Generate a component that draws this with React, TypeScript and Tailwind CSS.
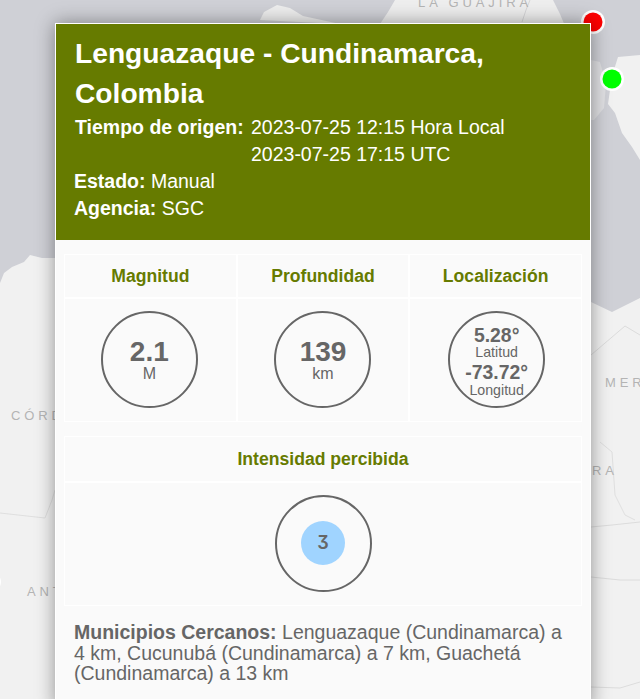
const font = "font-['Liberation_Sans',Arial,sans-serif]";

function MapBackground() {
  return (
    <svg className="absolute inset-0" width="640" height="699" viewBox="0 0 640 699">
      <rect width="640" height="699" fill="#cfd0d6" />
      <path d="M0 283 L4 273 L12 267 L24 262 L30 255 L42 258 L60 258 L60 699 L0 699 Z" fill="#f1f1f1" />
      <path d="M260 20 L264 12 L277 5 L290 8 L303 16 L340 24 Z" fill="#eeeeee" />
      <path d="M380 24 L388 12 L395 0 L553 0 L560 14 L565 26 Z" fill="#eeeeee" />
      <path d="M530 0 L526 10 L522 22" fill="none" stroke="#d6d6d8" />
      <path d="M591 60 L600 62 L606 84 L604 108 L594 120 L591 120 Z" fill="#dfdfe2" />
      <path d="M618 57 L640 55 L640 160 L632 147 L622 133 L615 113 L608 104 L612 76 Z" fill="#f1f1f1" />
      <path d="M591 302 L612 312 L628 304 L640 298 L640 699 L591 699 Z" fill="#f1f1f1" />
      <path d="M591 355 L625 326 L640 335" fill="none" stroke="#dcdcdc" />
      <path d="M591 527 L612 525 L640 522 M591 577 L620 580 L640 580 M591 687 L620 688 L640 682" fill="none" stroke="#dcdcdc" />
      <path d="M600 442 L612 452 L615 495 L625 515 L635 520" fill="none" stroke="#dfdfdf" />
      <path d="M0 513 L45 518 L52 500 L55 490" fill="none" stroke="#dfdfdf" />
      <circle cx="-9" cy="582" r="10" fill="#ffffff" />
      <circle cx="593" cy="22" r="12" fill="#ffffff" />
      <circle cx="593" cy="22" r="9.5" fill="#ff0000" />
      <circle cx="612" cy="79" r="12" fill="#ffffff" />
      <circle cx="612" cy="79" r="9.5" fill="#00ff00" />
    </svg>
  );
}

function MapLabel({ children, className }: { children: string; className: string }) {
  return <span className={`absolute text-[13px] leading-none tracking-[0.3em] text-[#b4b4b4] ${className}`}>{children}</span>;
}

function Circle({ children }: { children: React.ReactNode }) {
  return (
    <div className="flex h-[97px] w-[97px] flex-col items-center justify-center rounded-full border-[2px] border-[#666666]">
      {children}
    </div>
  );
}

function Cell({ children, className = "" }: { children: React.ReactNode; className?: string }) {
  return <div className={`flex items-center justify-center bg-[#fafafa] ${className}`}>{children}</div>;
}

function Heading({ children }: { children: string }) {
  return <h3 className="mt-[2px] text-[17.6px] leading-none font-bold text-[#667b00]">{children}</h3>;
}

export default function App() {
  return (
    <div className={`relative h-[699px] w-[640px] overflow-hidden ${font}`}>
      <MapBackground />
      <MapLabel className="left-[418px] top-[-4px]">LA GUAJIRA</MapLabel>
      <MapLabel className="left-[11px] top-[409px]">CÓRD</MapLabel>
      <MapLabel className="left-[27px] top-[585px]">ANT</MapLabel>
      <MapLabel className="left-[605px] top-[376px]">MER</MapLabel>
      <MapLabel className="left-[592px] top-[464px]">RA</MapLabel>

      <div className="absolute left-[55px] top-[23px] w-[536px] border border-white bg-[#fafafa] shadow-[0_0_18px_rgba(0,0,0,0.4)]">
        <header className="h-[216px] bg-[#667b00] pl-[18px] pt-[9px] text-white">
          <h1 className="pl-px text-[28.2px] leading-[40px] font-bold">Lenguazaque - Cundinamarca, Colombia</h1>
          <div className="mt-px flex pl-px text-[19.5px] leading-[27px]">
            <b className="w-[176px] shrink-0">Tiempo de origen:</b>
            <div>
              <div>2023-07-25 12:15 Hora Local</div>
              <div>2023-07-25 17:15 UTC</div>
            </div>
          </div>
          <p className="text-[19.5px] leading-[27px]"><b>Estado:</b> Manual</p>
          <p className="text-[19.5px] leading-[27px]"><b>Agencia:</b> SGC</p>
        </header>

        <div className="px-2 pt-[14px]">
          <div className="grid grid-cols-3 gap-[2px] border border-white bg-white">
            <Cell className="h-[42px]"><Heading>Magnitud</Heading></Cell>
            <Cell className="h-[42px]"><Heading>Profundidad</Heading></Cell>
            <Cell className="h-[42px]"><Heading>Localización</Heading></Cell>
            <Cell className="h-[122px] pb-[2px] pr-[2px]">
              <Circle>
                <span className="mt-[2px] text-[28px] leading-[26px] font-bold text-[#666666]">2.1</span>
                <span className="mt-px text-[16px] leading-[16px] text-[#666666]">M</span>
              </Circle>
            </Cell>
            <Cell className="h-[122px] pb-[2px]">
              <Circle>
                <span className="mt-[2px] text-[28px] leading-[26px] font-bold text-[#666666]">139</span>
                <span className="mt-px text-[16px] leading-[16px] text-[#666666]">km</span>
              </Circle>
            </Cell>
            <Cell className="h-[122px] pb-[2px] pl-[2px]">
              <Circle>
                <span className="mt-[6px] text-[19.4px] leading-[18px] font-bold text-[#666666]">5.28°</span>
                <span className="text-[14.2px] leading-[16px] text-[#666666]">Latitud</span>
                <span className="mt-[2px] text-[19.4px] leading-[20px] font-bold text-[#666666]">-73.72°</span>
                <span className="text-[14.2px] leading-[16px] text-[#666666]">Longitud</span>
              </Circle>
            </Cell>
          </div>

          <div className="mt-[14px] flex flex-col gap-[2px] border border-white bg-white">
            <Cell className="h-[44px]"><Heading>Intensidad percibida</Heading></Cell>
            <Cell className="h-[122px] pb-[2px]">
              <Circle>
                <div className="flex h-11 w-11 items-center justify-center rounded-full bg-[#a0d4ff]">
                  <span className="font-['Inter',sans-serif] text-[18px] leading-none font-semibold text-[#666666] [font-feature-settings:'cv09']">3</span>
                </div>
              </Circle>
            </Cell>
          </div>

          <p className="mt-[16px] mb-[24px] px-[10px] text-[19.5px] leading-[20.5px] text-[#666666]">
            <b>Municipios Cercanos:</b> Lenguazaque (Cundinamarca) a 4 km, Cucunubá (Cundinamarca) a 7 km, Guachetá (Cundinamarca) a 13 km
          </p>
        </div>
      </div>
    </div>
  );
}
